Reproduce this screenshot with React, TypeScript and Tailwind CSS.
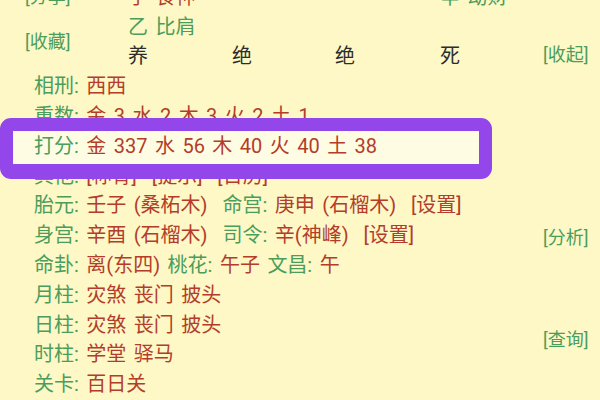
const green = "text-[#4b9d5c]";
const red = "text-[#b33d2a]";

function Link({ children, className = "" }: { children: React.ReactNode; className?: string }) {
  return <div className={`h-[29.8px] flex items-center text-[18px] ${green} ${className}`}>{children}</div>;
}

function Row({ children }: { children: React.ReactNode }) {
  return <div className="h-[29.8px] flex items-center whitespace-pre pl-[34px]">{children}</div>;
}

function L({ children }: { children: React.ReactNode }) {
  return <span className={green}>{children}</span>;
}
function V({ children }: { children: React.ReactNode }) {
  return <span className={red}>{children}</span>;
}

export default function App() {
  return (
    <div className="h-[400px] w-[600px] overflow-hidden bg-[#fdf8c6] font-['Roboto','Noto_Sans_CJK_SC',sans-serif] text-[20px] leading-none [word-spacing:2.5px]">
      <div className="-mt-[18px] flex">
        <div className="flex-1">
          {/* pillars block */}
          <div className="flex">
            <div className="w-[128px] pl-[25px]">
              <Link>[分享]</Link>
              <Link className="mt-[15px]">[收藏]</Link>
            </div>
            <div className="grid flex-1 grid-cols-[104px_103px_105px_1fr] auto-rows-[29.8px] items-center whitespace-pre">
              <span className={red}>子 食神</span>
              <span />
              <span />
              <span className={green}>辛 劫财</span>
              <span className={green}>乙 比肩</span>
              <span />
              <span />
              <span />
              <span className="text-[#2d2d2d]">养</span>
              <span className="text-[#2d2d2d]">绝</span>
              <span className="text-[#2d2d2d]">绝</span>
              <span className="text-[#2d2d2d]">死</span>
            </div>
          </div>

          <Row><L>相刑: </L><V>西西</V></Row>
          <Row><L>重数: </L><V>金 3 水 2 木 3 火 2 土 1</V></Row>
          <div className="relative h-[29.8px] flex items-center whitespace-pre pl-[34px]">
            <div className="absolute left-0 -top-[13px] h-[61px] w-[492px] rounded-[11px] border-[13px] border-b-[15px] border-[#9346ea] bg-[#fffce4]" />
            <span className="relative">
              <L>打分: </L><V>金 337 水 56 木 40 火 40 土 38</V>
            </span>
          </div>
          <Row><L>其他: </L><V>[称骨]  [提示]  [日历]</V></Row>
          <Row>
            <L>胎元: </L><V>壬子 (桑柘木)  </V><L>命宫: </L><V>庚申 (石榴木)  [设置]</V>
          </Row>
          <Row>
            <L>身宫: </L><V>辛酉 (石榴木)  </V><L>司令: </L><V>辛(神峰)  [设置]</V>
          </Row>
          <Row>
            <L>命卦: </L><V>离(东四) </V><L>桃花: </L><V>午子 </V><L>文昌: </L><V>午</V>
          </Row>
          <Row><L>月柱: </L><V>灾煞 丧门 披头</V></Row>
          <Row><L>日柱: </L><V>灾煞 丧门 披头</V></Row>
          <Row><L>时柱: </L><V>学堂 驿马</V></Row>
          <Row><L>关卡: </L><V>百日关</V></Row>
        </div>

        <div className="w-[57px] flex flex-col">
          <Link className="mt-[58px]">[收起]</Link>
          <Link className="mt-[153px]">[分析]</Link>
          <Link className="mt-[73px]">[查询]</Link>
        </div>
      </div>
    </div>
  );
}
